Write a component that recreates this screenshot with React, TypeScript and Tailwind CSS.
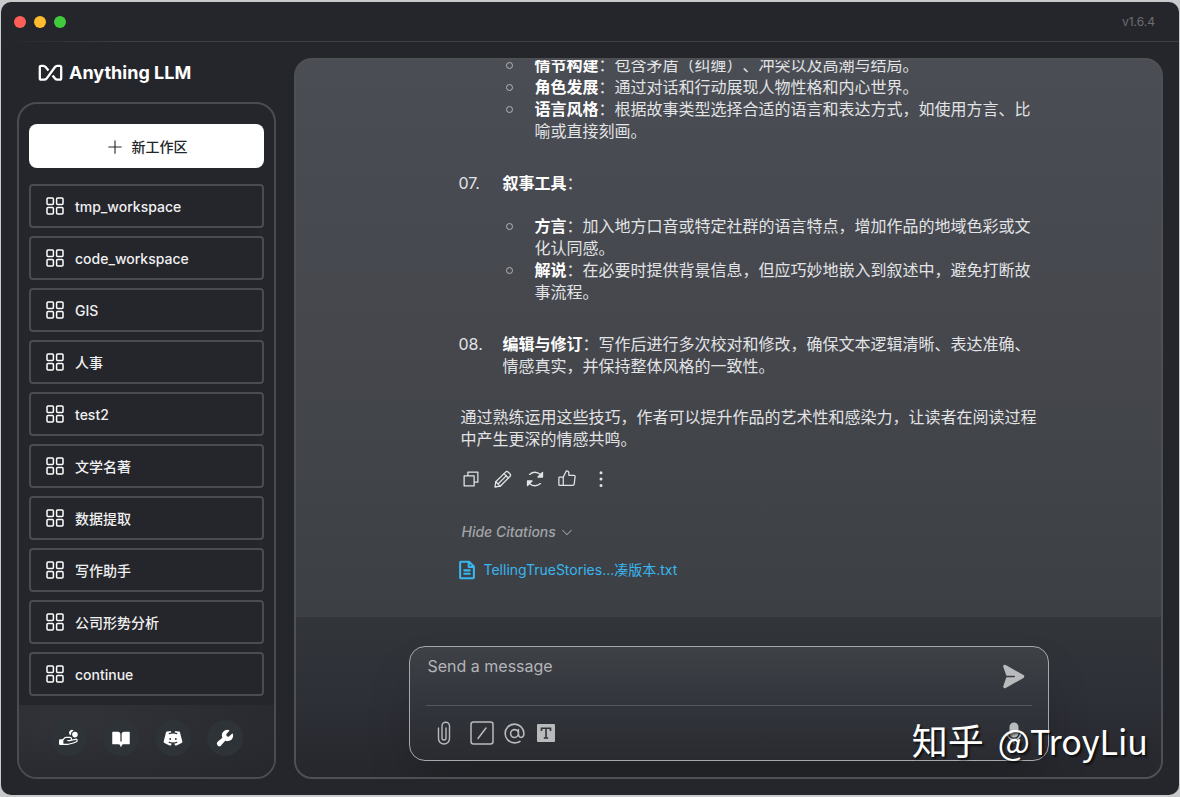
import React from 'react'
import {
   PiAt,
   PiBookOpenFill,
   PiCaretDown,
   PiCopy,
   PiDiscordLogoFill,
   PiDotsThreeVerticalBold,
   PiFileTextBold,
   PiHandCoinsFill,
   PiMicrophoneFill,
   PiPaperPlaneRightFill,
   PiPlus,
   PiThumbsUp,
   PiWrenchFill,
} from 'react-icons/pi'

const workspaces = ['tmp_workspace', 'code_workspace', 'GIS', '人事', 'test2', '文学名著', '数据提取', '写作助手', '公司形势分析', 'continue']

const links = [
   { label: 'Support', icon: PiHandCoinsFill },
   { label: 'Docs', icon: PiBookOpenFill },
   { label: 'Discord', icon: PiDiscordLogoFill },
   { label: 'Settings', icon: PiWrenchFill },
]

const GridIcon = () => (
   <svg width="18" height="18" viewBox="0 0 18 18" fill="none" stroke="white" strokeWidth="1.5" className="shrink-0">
      <rect x="1" y="1" width="6.4" height="6.4" rx="1" />
      <rect x="10.600" y="1" width="6.4" height="6.4" rx="1" />
      <rect x="1" y="10.600" width="6.4" height="6.4" rx="1" />
      <rect x="10.600" y="10.600" width="6.4" height="6.4" rx="1" />
   </svg>
)

const PencilIcon = () => (
   <svg width="20" height="20" viewBox="0 0 20 20" fill="none" stroke="currentColor" strokeWidth="1.3" strokeLinejoin="round" strokeLinecap="round">
      <path d="M2 18 2.800 12.800 12.500 3.100Q13.800 1.800 15.200 3.100L16.900 4.800Q18.200 6.200 16.900 7.500L7.200 17.200Z" />
      <path d="M2.800 12.800 7.200 17.200M5 15 13.400 6.600M11 4.600 15.400 9" />
   </svg>
)

const RefreshIcon = () => (
   <svg width="20" height="20" viewBox="0 0 20 20" fill="none" stroke="currentColor" strokeWidth="1.3" strokeLinejoin="round" strokeLinecap="round">
      <path d="M4.500 5.400Q10 1 15.600 5.600M15.500 14.600Q10 19 4.400 14.400" />
      <path d="M17.500 3.500V8H13ZM2.500 16.500V12H7Z" fill="currentColor" />
   </svg>
)

const ClipIcon = () => (
   <svg width="14" height="24" viewBox="0 0 14 24" fill="none" stroke="currentColor" strokeWidth="1.4" strokeLinecap="round">
      <path d="M1.500 7V17.500A5.500 5.500 0 0 0 12.500 17.500V5A3.700 3.700 0 0 0 5 5V17A2 2 0 0 0 9 17V7" />
   </svg>
)

const actions = [
   { label: 'Copy', icon: PiCopy },
   { label: 'Edit', icon: PencilIcon },
   { label: 'Regenerate', icon: RefreshIcon },
   { label: 'Good response', icon: PiThumbsUp },
]

const Logo = () => (
   <div className="flex h-11 items-center gap-1.5 pl-[21px] pt-px">
      <svg width="25" height="18" viewBox="0 0 25 18" fill="none" stroke="white" strokeWidth="2.3" strokeLinejoin="round">
         <path d="M10.500 6.500 7.600 3Q6.600 1.800 5.200 1.800H3.300Q1.800 1.800 1.800 3.300V14.200Q1.800 15.700 3.300 15.700H6.300Q7.700 15.700 8.600 14.600L17 3Q17.900 1.800 19.300 1.800H21.700Q23.200 1.800 23.200 3.300V14.200Q23.200 15.700 21.700 15.700H19.300Q18 15.700 17 14.500L14.600 11.500" />
      </svg>
      <span className="text-lg font-bold text-white">Anything LLM</span>
   </div>
)

const Sidebar = () => (
   <aside className="flex w-[259px] shrink-0 flex-col">
      <Logo />
      <div className="mt-2 flex min-h-0 flex-1 flex-col overflow-hidden rounded-[20px] border-2 border-[#4b4c50]">
         <nav className="flex min-h-0 flex-1 flex-col gap-2 overflow-hidden px-2.5 pt-5">
            <button className="mb-2 flex h-11 shrink-0 items-center justify-center gap-2 rounded-lg bg-white pt-px text-sm font-medium text-[#222628]">
               <PiPlus size={18} />
               新工作区
            </button>
            {workspaces.map((name) => (
               <a key={name} href="#" className="flex h-11 shrink-0 items-center gap-[11px] rounded border-2 border-[#4b4c50] px-[15px] text-sm text-[#f0f0f1]">
                  <GridIcon />
                  <span className="pt-0.5 font-medium">{name}</span>
               </a>
            ))}
         </nav>
         <div className="flex h-[72px] shrink-0 justify-center gap-4 bg-radial-[at_20%_20%] from-[#313338] to-[#26272c] pt-[15px]">
            {links.map(({ label, icon: Icon }) => (
               <a key={label} href="#" aria-label={label} className="flex size-9 items-center justify-center rounded-full bg-[#2e3337] text-white">
                  <Icon size={20} />
               </a>
            ))}
         </div>
      </div>
   </aside>
)

const Bullet = ({ title, children }: { title: string; children: React.ReactNode }) => (
   <li className="flex">
      <span className="flex h-[22px] w-8 shrink-0 items-center pl-[3px]">
         <span className="size-[7px] rounded-full border border-[#b5b6b9]"></span>
      </span>
      <p>
         <strong className="font-bold text-white">{title}</strong>：{children}
      </p>
   </li>
)

const Message = () => (
   <div className="pl-[52px] pr-2 text-base leading-[22px] text-[#e2e3e5] [text-spacing-trim:space-all]">
      <ul className="pl-[42px]">
         <Bullet title="情节构建">包含矛盾（纠缠）、冲突以及高潮与结局。</Bullet>
         <Bullet title="角色发展">通过对话和行动展现人物性格和内心世界。</Bullet>
         <Bullet title="语言风格">根据故事类型选择合适的语言和表达方式，如使用方言、比喻或直接刻画。</Bullet>
      </ul>
      <ol className="mt-[30px]">
         <li className="flex">
            <span className="-ml-0.5 w-11 shrink-0">07.</span>
            <p>
               <strong className="font-bold text-white">叙事工具</strong>：
            </p>
         </li>
         <li className="mt-[21px]">
            <ul className="pl-[42px]">
               <Bullet title="方言">加入地方口音或特定社群的语言特点，增加作品的地域色彩或文化认同感。</Bullet>
               <Bullet title="解说">在必要时提供背景信息，但应巧妙地嵌入到叙述中，避免打断故事流程。</Bullet>
            </ul>
         </li>
         <li className="mt-[30px] flex">
            <span className="-ml-0.5 w-11 shrink-0">08.</span>
            <p>
               <strong className="font-bold text-white">编辑与修订</strong>：写作后进行多次校对和修改，确保文本逻辑清晰、表达准确、情感真实，并保持整体风格的一致性。
            </p>
         </li>
      </ol>
      <p className="mt-[29px]">通过熟练运用这些技巧，作者可以提升作品的艺术性和感染力，让读者在阅读过程中产生更深的情感共鸣。</p>
      <div className="mt-[17px] flex items-center gap-3">
         {actions.map(({ label, icon: Icon }) => (
            <button key={label} aria-label={label} className="flex size-5 items-center justify-center">
               <Icon size={20} />
            </button>
         ))}
         <button aria-label="More" className="flex size-6 items-center justify-center">
            <PiDotsThreeVerticalBold size={24} />
         </button>
      </div>
   </div>
)

const Citations = () => (
   <div className="mt-[31px] pl-[47px]">
      <button className="flex h-5 items-center gap-1 pl-1.5 text-sm font-medium italic text-[#a3a4a7]">
         Hide Citations
         <PiCaretDown size={14} />
      </button>
      <a href="#" className="mt-4 flex h-6 items-center gap-1.5 text-sm text-[#38b6f0]">
         <PiFileTextBold size={22} />
         TellingTrueStories...凑版本.txt
      </a>
   </div>
)

const Prompt = () => (
   <form className="mx-auto flex h-[115px] w-full max-w-[640px] flex-col rounded-2xl border border-[#a6a8ab] bg-linear-to-b from-[#3e4145] via-[#33353d] to-[#292b30] px-4 shadow-2xl">
      <div className="flex h-[59px] shrink-0 items-start justify-between border-b border-[#54575b] pr-1.5">
         <textarea
            aria-label="Message"
            placeholder="Send a message"
            className="h-10 flex-1 resize-none bg-transparent pl-0.5 pt-[7px] text-base text-white outline-none placeholder:text-[#b3b5b8]"
         />
         <button type="button" aria-label="Send" className="mt-4 text-[#b9babc]">
            <PiPaperPlaneRightFill size={27} />
         </button>
      </div>
      <div className="flex flex-1 items-center justify-between pl-[11px] pr-1.5 text-[#b9babc]">
         <div className="flex items-center">
            <button type="button" aria-label="Attach">
               <ClipIcon />
            </button>
            <button type="button" aria-label="Slash commands" className="ml-[19px]">
               <svg width="24" height="24" viewBox="0 0 24 24" fill="none" stroke="currentColor" strokeWidth="1.500">
                  <rect x="1" y="1" width="22" height="22" rx="2.500" />
                  <path d="M8 17.500 16 7" strokeLinecap="round" />
               </svg>
            </button>
            <button type="button" aria-label="Agents" className="ml-2">
               <PiAt size={25} />
            </button>
            <button type="button" aria-label="Text size" className="ml-2.5">
               <svg width="18" height="18" viewBox="0 0 18 18">
                  <rect width="18" height="18" rx="1" fill="currentColor" />
                  <path d="M4.500 7V4.300H13.500V7M9 4.300V14M6.800 14H11.200" fill="none" stroke="#303238" strokeWidth="1.600" />
               </svg>
            </button>
         </div>
         <button type="button" aria-label="Microphone">
            <PiMicrophoneFill size={24} />
         </button>
      </div>
   </form>
)

const App = () => {
   return (
      <div className="h-screen bg-[#c9cacc] px-px py-0.5 font-['Inter','Noto_Sans_CJK_SC',sans-serif]">
         <div className="relative flex h-full flex-col overflow-hidden rounded-[10px] bg-[#25262b]">
            <header className="shrink-0">
               <div className="flex h-[39px] items-center justify-between pl-[13px] pr-6">
                  <div className="flex gap-2">
                     <span className="size-3 rounded-full bg-[#ff5f57]"></span>
                     <span className="size-3 rounded-full bg-[#febb2e]"></span>
                     <span className="size-3 rounded-full bg-[#42ca3e]"></span>
                  </div>
                  <span className="text-xs text-[#6d6e72]">v1.6.4</span>
               </div>
               <div className="h-px bg-linear-to-r from-transparent via-[#3d3e43] via-10% to-[#3d3e43]"></div>
            </header>
            <div className="flex min-h-0 flex-1 gap-[18px] px-4 pb-4">
               <div className="flex pt-2">
                  <Sidebar />
               </div>
               <main className="mt-4 flex min-w-0 flex-1 flex-col overflow-hidden rounded-[18px] border-2 border-[#4e5054] bg-[#474a51]">
                  <section className="flex min-h-0 flex-1 flex-col justify-end overflow-hidden bg-linear-to-b from-[#4a4d54] via-[#45474d] to-[#3c4044] pb-[35px]">
                     <div className="mx-auto w-full max-w-[640px]">
                        <Message />
                        <Citations />
                     </div>
                  </section>
                  <footer className="shrink-0 bg-linear-to-b from-[#323539] via-[#2e3038] to-[#26272c] pb-4 pt-[29px]">
                     <Prompt />
                  </footer>
               </main>
            </div>
            <div className="pointer-events-none absolute bottom-[29px] right-[31px] flex items-baseline gap-3.5 text-white font-['Noto_Sans_CJK_SC',sans-serif] [text-shadow:2px_2px_2px_#000a]">
               <span className="text-4xl">知乎</span>
               <span className="text-[34px]">@TroyLiu</span>
            </div>
         </div>
      </div>
   )
}

export default App
